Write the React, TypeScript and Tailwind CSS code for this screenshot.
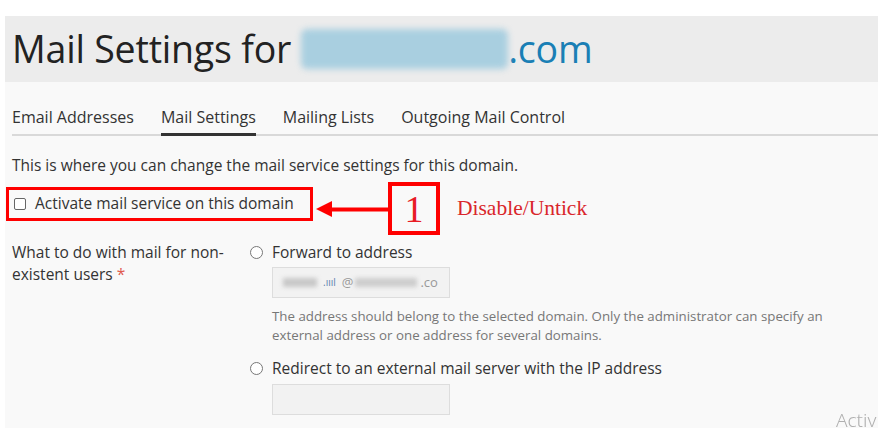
import React from "react"

const sans = { fontFamily: '"Open Sans", "Noto Sans", sans-serif' }
const serif = { fontFamily: '"Liberation Serif", serif' }

function Tab({ label, active }: { label: string; active?: boolean }) {
  return (
    <div
      className={
        "pb-[5px] pt-[1px] text-[16px] leading-[22px] text-[#333] " +
        (active ? "border-b-[3px] border-[#333] -mb-[2px]" : "")
      }
    >
      {label}
    </div>
  )
}

function Radio({ label }: { label: string }) {
  return (
    <label className="flex items-center gap-[9px] text-[15.5px] leading-[22px] text-[#333]">
      <span className="h-[13px] w-[13px] rounded-full border border-[#777] bg-white" />
      {label}
    </label>
  )
}

export default function App() {
  return (
    <div className="h-[428px] w-[878px] overflow-hidden bg-white pl-[5px] pt-[16px]" style={sans}>
      <div className="flex h-[66px] items-center bg-[#ececec] pl-[7px]">
        <h1 className="flex items-center text-[37.5px] leading-none tracking-[-0.2px] text-[#222]">
          <span>Mail Settings for</span>
          <span className="ml-[10px] h-[40px] w-[207px] rounded-[6px] bg-[#a9cfe0] blur-[3px]" />
          <span className="text-[#1a7fb5]">.com</span>
        </h1>
      </div>

      <div className="h-full bg-[#f9f9f9] pl-[7px] pt-[23px]">
        <div className="flex gap-[27px] border-b-2 border-[#d9d9d9]">
          <Tab label="Email Addresses" />
          <Tab label="Mail Settings" active />
          <Tab label="Mailing Lists" />
          <Tab label="Outgoing Mail Control" />
        </div>

        <p className="mt-[19px] text-[15.5px] leading-[20px] text-[#333]">
          This is where you can change the mail service settings for this domain.
        </p>

        <div className="relative mt-[12px]">
          <div className="-ml-[6px] flex h-[34px] w-[307px] items-center gap-[9px] border-[3px] border-[#f00] pl-[5px] text-[15.5px] text-[#333]">
            <span className="h-[12px] w-[12px] rounded-[2px] border border-[#666] bg-white" />
            Activate mail service on this domain
          </div>
          <div className="absolute left-[304px] top-[-5px] flex items-center">
            <svg width="72" height="20" viewBox="0 0 72 20">
              <polygon points="0,10 16,2 16,18" fill="#f00" />
              <rect x="14" y="8.5" width="58" height="4" fill="#f00" />
            </svg>
            <div
              className="flex h-[53px] w-[52px] items-center justify-center border-[4px] border-[#f00] text-[38px] leading-none text-[#e81c24]"
              style={serif}
            >
              1
            </div>
            <span className="ml-[17px] text-[21.5px] text-[#d9262b]" style={serif}>
              Disable/Untick
            </span>
          </div>
        </div>

        <div className="mt-[20px] flex">
          <div className="w-[238px] text-[15.5px] leading-[22px] text-[#333]">
            What to do with mail for non-
            <br />
            existent users <span className="text-[#e05a4e]">*</span>
          </div>
          <div className="flex flex-col">
            <Radio label="Forward to address" />
            <div className="ml-[22px] mt-[4px] flex h-[31px] w-[178px] items-center border border-[#ddd] bg-[#f2f2f2] px-[10px] text-[13px] text-[#999]">
              <span className="h-[9px] w-[34px] bg-[#c8c8c8] blur-[2px]" />
              <span className="ml-[6px] text-[10px] text-[#5a7fb0]">.ıııl</span>
              <span className="ml-[6px]">@</span>
              <span className="ml-[2px] h-[9px] w-[62px] bg-[#cdcdcd] blur-[2px]" />
              <span className="ml-[3px]">.co</span>
            </div>
            <p className="ml-[22px] mt-[9px] w-[570px] text-[13.3px] leading-[19px] text-[#777]">
              The address should belong to the selected domain. Only the administrator can specify an
              external address or one address for several domains.
            </p>
            <div className="mt-[12px]">
              <Radio label="Redirect to an external mail server with the IP address" />
            </div>
            <div className="ml-[22px] mt-[5px] h-[31px] w-[178px] border border-[#ddd] bg-[#f2f2f2]" />
          </div>
        </div>
      </div>

      <div
        className="pointer-events-none fixed left-[836px] top-[406px] text-[19px] font-light text-[#b0b0b0]"
        style={{ fontFamily: '"Noto Sans", sans-serif' }}
      >
        Activ
      </div>
    </div>
  )
}
